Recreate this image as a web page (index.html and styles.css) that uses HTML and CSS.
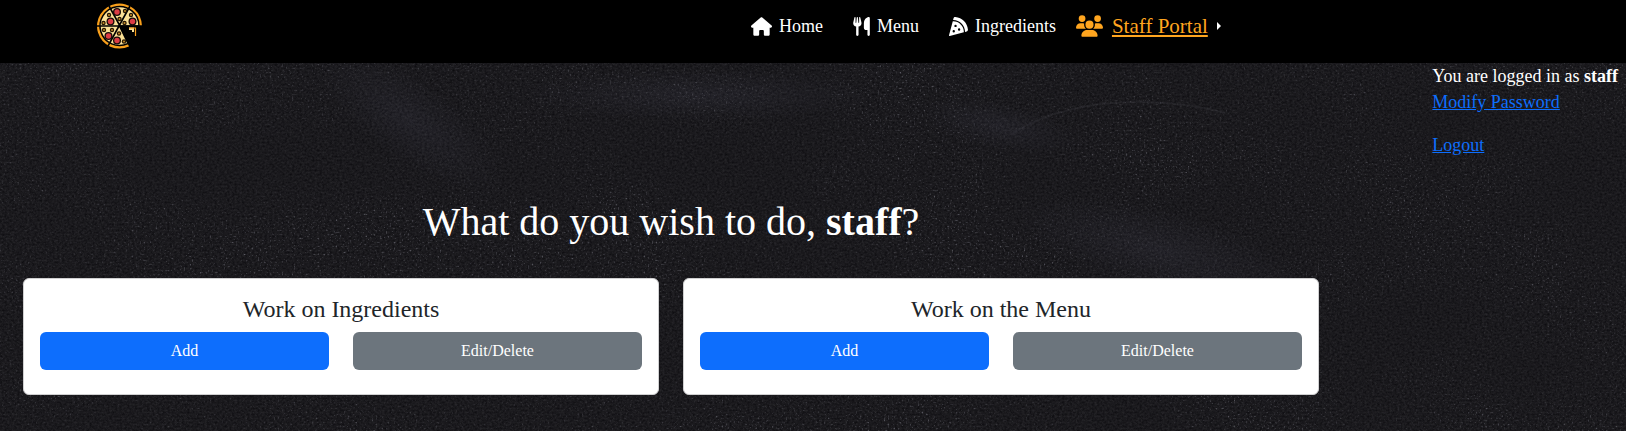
FILE: index.html
```html
<!DOCTYPE html>
<html lang="en">
<head>
<meta charset="utf-8">
<meta name="viewport" content="width=device-width, initial-scale=1">
<title>Staff Portal</title>
<link rel="stylesheet" href="styles.css">
</head>
<body>
<svg class="chalkboard" aria-hidden="true">
  <defs>
    <filter id="grain" x="0" y="0" width="100%" height="100%" color-interpolation-filters="sRGB">
      <feTurbulence type="fractalNoise" baseFrequency="0.4 0.5" numOctaves="3" seed="8"/>
      <feColorMatrix values="0.13 0 0 0 0.037  0.13 0 0 0 0.034  0.13 0 0 0 0.048  0 0 0 0 1"/>
    </filter>
    <filter id="dust" x="0" y="0" width="100%" height="100%" color-interpolation-filters="sRGB">
      <feTurbulence type="fractalNoise" baseFrequency="0.5" numOctaves="2" seed="21" result="fine"/>
      <feColorMatrix in="fine" values="0 0 0 0 0.5  0 0 0 0 0.5  0 0 0 0 0.54  0 3 0 0 -1.9" result="specks"/>
      <feTurbulence type="fractalNoise" baseFrequency="0.006 0.01" numOctaves="3" seed="5"/>
      <feColorMatrix values="0 0 0 0 1  0 0 0 0 1  0 0 0 0 1  2 0 0 0 -0.5" result="patches"/>
      <feComposite in="specks" in2="patches" operator="in"/>
    </filter>
    <radialGradient id="smudge">
      <stop offset="0" stop-color="#8080a0" stop-opacity="0.09"/>
      <stop offset="1" stop-color="#8080a0" stop-opacity="0"/>
    </radialGradient>
  </defs>
  <rect width="100%" height="100%" filter="url(#grain)"/>
  <rect width="100%" height="100%" filter="url(#dust)"/>
  <ellipse cx="1000" cy="126" rx="80" ry="24" fill="url(#smudge)" transform="rotate(12 1000 126)"/>
  <ellipse cx="410" cy="120" rx="110" ry="40" fill="url(#smudge)" transform="rotate(35 410 120)"/>
  <ellipse cx="1160" cy="250" rx="150" ry="40" fill="url(#smudge)" transform="rotate(14 1160 250)"/>
  <ellipse cx="700" cy="95" rx="180" ry="26" fill="url(#smudge)"/>
  <path d="M1012 134Q1060 102 1140 102Q1190 103 1225 113" fill="none" stroke="#9a9aa8" stroke-width="2" stroke-opacity="0.08"/>
</svg>

<header class="topbar">
  <a class="brand" href="#" aria-label="Pizza home">
    <svg class="brand-logo" viewBox="0 0 46 46" aria-hidden="true">
      <defs>
        <g id="pepperoni"><circle r="4" fill="#160b08"/><circle r="2.700" fill="#dc3d45"/></g>
        <g id="olive"><circle r="2.200" fill="#241503"/><circle r="1" fill="#c58c27"/></g>
      </defs>
      <path d="M22.500 23H45A22.500 22.500 0 1 0 32 43.500Z" fill="#f9a01b"/>
      <path d="M22.500 23H42A19.500 19.500 0 1 0 31 40.500Z" fill="#fbe196" stroke="#000" stroke-width="1.500"/>
      <path d="M0 23H46M12 3L34 43M33 3L11 43" stroke="#000" stroke-width="1.600" fill="none"/>
      <path d="M33 42L22.500 23L46 24V46Z" fill="#000"/>
      <path d="M32 24.500H37V29H35V27H32Z" fill="#fbe196"/>
      <path d="M32 25H38.500V33" stroke="#f9a01b" stroke-width="1.200" fill="none"/>
      <use href="#pepperoni" x="20" y="9"/><use href="#pepperoni" x="35.500" y="18.500"/>
      <use href="#pepperoni" x="13.500" y="18.500"/><use href="#pepperoni" x="11.500" y="33"/>
      <use href="#pepperoni" x="20" y="37.500"/>
      <use href="#olive" x="28" y="8"/><use href="#olive" x="22.500" y="16"/><use href="#olive" x="34" y="12"/>
      <use href="#olive" x="27.500" y="20"/><use href="#olive" x="12" y="12"/><use href="#olive" x="6.500" y="20"/>
      <use href="#olive" x="7" y="27"/><use href="#olive" x="15" y="27"/><use href="#olive" x="22" y="30.500"/>
      <use href="#olive" x="27" y="38.500"/>
    </svg>
  </a>
  <nav class="nav" aria-label="Main">
    <a class="nav-link" href="#">
      <svg class="icon icon-home" viewBox="0 0 576 512" aria-hidden="true"><path d="M575.800 255.500c0 18-15 32.100-32 32.100h-32l.7 160.200c0 2.700-.2 5.400-.5 8.100V472c0 22.100-17.900 40-40 40H392c-22.100 0-40-17.900-40-40V384c0-17.700-14.300-32-32-32H256c-17.700 0-32 14.300-32 32v88c0 22.100-17.900 40-40 40H104c-22.100 0-40-17.900-40-40V287.600H32c-18 0-32-14-32-32.100c0-9 3-17 10-24L266.400 8c7-7 15-8 22-8s15 2 21 7L564.800 231.500c8 7 12 15 11 24z"/></svg>
      <span>Home</span>
    </a>
    <a class="nav-link" href="#">
      <svg class="icon icon-menu" viewBox="0 0 448 512" aria-hidden="true"><path d="M416 0C400 0 288 32 288 176V288c0 35.300 28.700 64 64 64h32V480c0 17.700 14.300 32 32 32s32-14.300 32-32V32c0-17.700-14.300-32-32-32zM64 16C64 7.800 57.900 1 49.700 .1S34.200 4.600 32.400 12.500L2.100 148.800C.7 155.100 0 161.500 0 167.900c0 45.900 35.100 83.600 80 87.700V480c0 17.700 14.300 32 32 32s32-14.300 32-32V255.600c44.900-4.100 80-41.800 80-87.700c0-6.400-.7-12.800-2.100-19.100L191.600 12.500c-1.800-8-9.300-13.300-17.400-12.400S160 7.800 160 16V150.200c0 5.400-4.400 9.800-9.800 9.800c-5.100 0-9.300-3.900-9.800-9L127.900 14.600C127.200 6.300 120.300 0 112 0s-15.200 6.300-15.900 14.600L83.700 151c-.5 5.100-4.700 9-9.800 9c-5.400 0-9.800-4.400-9.800-9.800V16z"/></svg>
      <span>Menu</span>
    </a>
    <a class="nav-link" href="#">
      <svg class="icon icon-slice" viewBox="0 0 512 512" aria-hidden="true"><path d="M169.700 .9c-22.800-1.600-41.900 14-47.500 34.700L110.400 80c.5 0 1.100 0 1.600 0c176.700 0 320 143.300 320 320c0 .5 0 1.100 0 1.600l44.400-11.800c20.800-5.500 36.300-24.700 34.700-47.500C498.500 159.500 352.500 13.500 169.700 .9zM399.800 410.200c.1-3.400 .2-6.800 .2-10.200c0-159.100-128.900-288-288-288c-3.400 0-6.800 .1-10.200 .2L.5 491.900c-1.500 5.500 .1 11.400 4.100 15.400s9.900 5.600 15.400 4.100L399.800 410.200zM176 208a32 32 0 1 1 0 64 32 32 0 1 1 0-64zm64 128a32 32 0 1 1 64 0 32 32 0 1 1-64 0zM96 384a32 32 0 1 1 64 0 32 32 0 1 1-64 0z"/></svg>
      <span>Ingredients</span>
    </a>
    <a class="nav-link nav-staff" href="#" aria-haspopup="true">
      <svg class="icon icon-users" viewBox="0 0 640 512" aria-hidden="true"><path d="M144 0a80 80 0 1 1 0 160A80 80 0 1 1 144 0zM512 0a80 80 0 1 1 0 160A80 80 0 1 1 512 0zM0 298.700C0 239.800 47.800 192 106.700 192h42.700c15.900 0 31 3.500 44.600 9.700c-1.300 7.200-1.900 14.700-1.900 22.300c0 38.200 16.800 72.500 43.300 96H21.300C9.600 320 0 310.400 0 298.700zM405.300 320c26.600-23.500 43.300-57.800 43.300-96c0-7.600-.7-15-1.900-22.300c13.600-6.300 28.700-9.700 44.600-9.700h42.700C592.200 192 640 239.800 640 298.700c0 11.800-9.600 21.300-21.300 21.300H405.300zM224 224a96 96 0 1 1 192 0 96 96 0 1 1-192 0zM128 485.300C128 411.700 187.700 352 261.300 352H378.700C452.300 352 512 411.700 512 485.300c0 14.700-11.900 26.700-26.700 26.700H154.700c-14.700 0-26.700-11.900-26.700-26.700z"/></svg>
      <span class="nav-staff-label">Staff Portal</span>
      <span class="caret"></span>
    </a>
  </nav>
</header>

<div class="page">
  <main class="content">
    <h1 class="question">What do you wish to do, <strong>staff</strong>?</h1>
    <div class="cards">
      <section class="card">
        <h2 class="card-title">Work on Ingredients</h2>
        <div class="actions">
          <button class="btn btn-primary" type="button">Add</button>
          <button class="btn btn-secondary" type="button">Edit/Delete</button>
        </div>
      </section>
      <section class="card">
        <h2 class="card-title">Work on the Menu</h2>
        <div class="actions">
          <button class="btn btn-primary" type="button">Add</button>
          <button class="btn btn-secondary" type="button">Edit/Delete</button>
        </div>
      </section>
    </div>
  </main>
  <aside class="account">
    <p class="account-line">You are logged in as <strong>staff</strong></p>
    <p class="account-line account-modify"><a href="#">Modify Password</a></p>
    <p class="account-line"><a href="#">Logout</a></p>
  </aside>
</div>
</body>
</html>
```

FILE: styles.css
```css
* {
  box-sizing: border-box;
}

body {
  margin: 0;
  min-height: 100vh;
  position: relative;
  background: #1a191d;
  color: #fff;
  font-family: "Liberation Serif", "Times New Roman", serif;
  font-size: 18px;
  line-height: 26px;
}

.chalkboard {
  position: absolute;
  inset: 0;
  z-index: -1;
  width: 100%;
  height: 100%;
}

.topbar {
  display: flex;
  align-items: flex-start;
  min-height: 63px;
  background: #000;
}

.brand {
  flex: 0 0 46%;
  padding: 3px 0 0 6%;
}

.brand-logo {
  display: block;
  width: 46px;
  height: 46px;
  margin-left: -1px;
}

.nav {
  display: flex;
  align-items: center;
  gap: 20px;
  padding: 13px 0 0 3px;
}

.nav-link {
  display: flex;
  align-items: center;
  gap: 7px;
  padding-right: 10px;
  color: #fff;
  text-decoration: none;
}

.icon {
  flex: none;
  display: block;
  fill: currentColor;
}

.icon-home {
  width: 21px;
  height: 19px;
}

.icon-menu {
  width: 17px;
  height: 19px;
}

.icon-slice {
  width: 19px;
  height: 19px;
}

.icon-users {
  width: 27px;
  height: 22px;
}

.nav-staff {
  gap: 9px;
  margin-left: -10px;
  color: #ffa51f;
}

.nav-staff-label {
  font-size: 21px;
  text-decoration: underline;
}

.caret {
  border: 4px solid transparent;
  border-left-color: #fff;
  border-right-width: 0;
}

.page {
  display: flex;
  align-items: flex-start;
}

.content {
  flex: 1;
  max-width: 1343px;
  padding: 135px 24px 36px 23px;
}

.question {
  margin: 0 0 32px;
  font-size: 40px;
  font-weight: 400;
  line-height: 48px;
  text-align: center;
}

.cards,
.actions {
  display: grid;
  grid-template-columns: 1fr 1fr;
  gap: 24px;
}

.card {
  padding: 16px 16px 24px;
  border: 1px solid #d0d0d1;
  border-radius: 6px;
  background: #fff;
  color: #212529;
}

.card-title {
  margin: 0 0 8px;
  font-size: 24px;
  font-weight: 400;
  line-height: 29px;
  text-align: center;
}

.btn {
  padding: 6px 12px;
  border: 1px solid transparent;
  border-radius: 6px;
  color: #fff;
  font-family: inherit;
  font-size: 16px;
  line-height: 24px;
  cursor: pointer;
}

.btn-primary {
  background-color: #0d6efd;
}

.btn-secondary {
  background-color: #6c757d;
}

.account {
  flex: none;
  margin-left: auto;
  padding-right: 8px;
}

.account-line {
  margin: 0;
}

.account-modify {
  margin-bottom: 17px;
}

.account a {
  color: #0d6efd;
}
```
